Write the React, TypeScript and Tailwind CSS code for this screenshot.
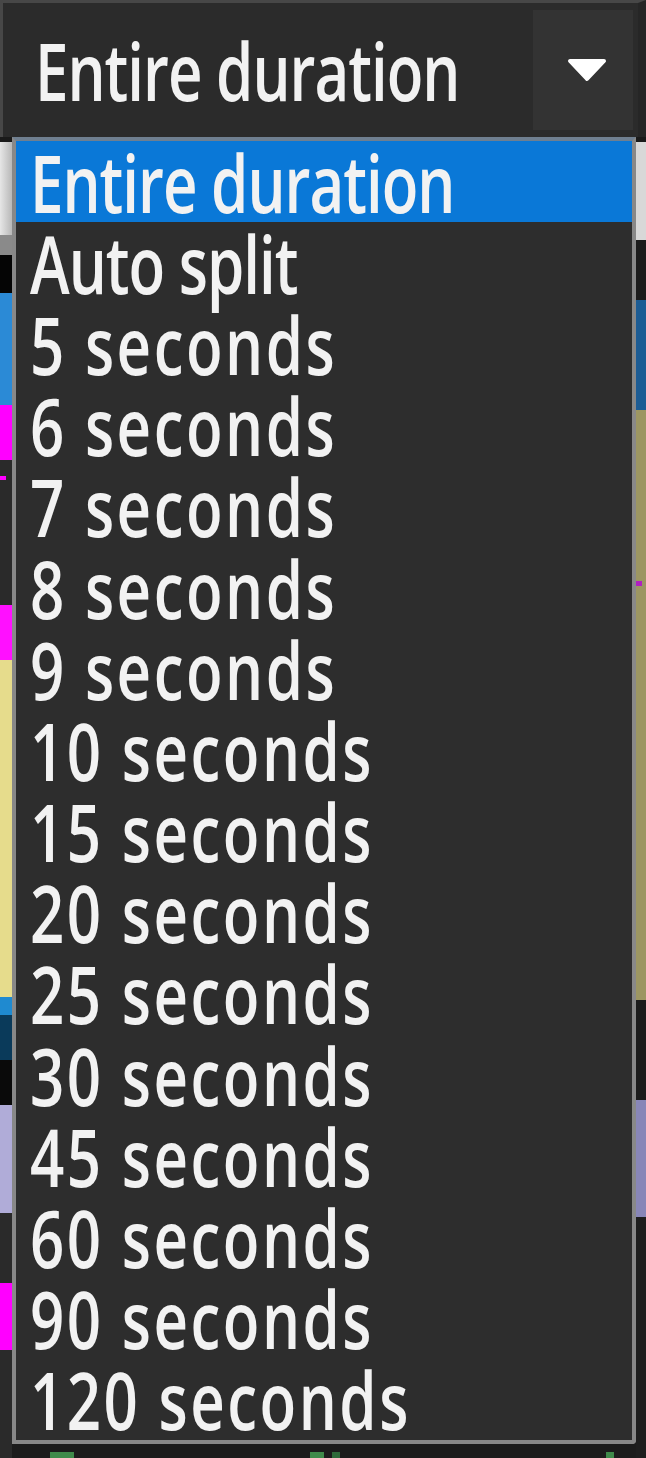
import React from 'react';

const items = [
  'Entire duration',
  'Auto split',
  '5 seconds',
  '6 seconds',
  '7 seconds',
  '8 seconds',
  '9 seconds',
  '10 seconds',
  '15 seconds',
  '20 seconds',
  '25 seconds',
  '30 seconds',
  '45 seconds',
  '60 seconds',
  '90 seconds',
  '120 seconds',
];

// bits of the window behind the open list, left edge
function LeftStrip() {
  return (
    <div className="w-[12px] flex flex-col shrink-0">
      <div className="h-[5px] bg-[#1a1a1a]" />
      <div className="h-[93px] bg-gradient-to-r from-[#e6e6e6] to-[#b8b8b8]" />
      <div className="h-[20px] bg-[#8a8a8a]" />
      <div className="h-[38px] bg-[#050505]" />
      <div className="h-[112px] bg-[#2b8ad6]" />
      <div className="h-[55px] bg-[#ff00ff]" />
      <div className="h-[145px] bg-[#2a2a2a] flex flex-col pt-[16px]">
        <div className="h-[4px] w-[6px] bg-[#ff00ff]" />
      </div>
      <div className="h-[55px] bg-[#ff10ff]" />
      <div className="h-[337px] bg-[#e6dc8c]" />
      <div className="h-[18px] bg-[#1f8ad0]" />
      <div className="h-[45px] bg-[#0a3a5a]" />
      <div className="h-[45px] bg-[#0a0a0a]" />
      <div className="h-[108px] bg-[#b0acd8]" />
      <div className="h-[70px] bg-[#2a2a2a]" />
      <div className="h-[67px] bg-[#ff00ff]" />
      <div className="flex-1 bg-[#2a2a2a]" />
    </div>
  );
}

function RightStrip() {
  return (
    <div className="w-[10px] flex flex-col shrink-0">
      <div className="h-[5px] bg-[#1a1a1a]" />
      <div className="h-[98px] bg-[#d8d8d8]" />
      <div className="h-[60px] bg-[#1c1c1c]" />
      <div className="h-[110px] bg-[#1c5c94]" />
      <div className="h-[590px] bg-[#9c9662] flex flex-col pt-[171px]">
        <div className="h-[5px] w-[6px] bg-[#b020c0]" />
      </div>
      <div className="h-[100px] bg-[#1c1c1c]" />
      <div className="h-[117px] bg-[#8886b8]" />
      <div className="flex-1 bg-[#1e1e1e]" />
    </div>
  );
}

function Item({ label, selected }: { label: string; selected?: boolean }) {
  const wide = /\d/.test(label);
  return (
    <div
      className={
        'h-[81.2px] flex items-center pl-[14px] ' +
        (selected ? 'bg-[#0a78d7]' : '')
      }
    >
      <span
        className={
          'inline-block scale-y-[1.34] leading-[58px] ' +
          (wide ? 'tracking-[2.5px]' : 'tracking-[-1px]')
        }
      >
        {label}
      </span>
    </div>
  );
}

export default function App() {
  return (
    <div className="w-[646px] h-[1458px] bg-[#1e1e1e] flex flex-col overflow-hidden font-['Open_Sans',sans-serif] font-semibold text-[60px] text-[#f2f2f2]">
      {/* Combo box */}
      <div className="h-[137px] flex shrink-0 border-t-[3px] border-l-[3px] border-r-[8px] border-[#474747] border-r-[#262626] bg-[#2b2b2b]">
        <div className="flex-1 flex items-center pl-[32px]">
          <span className="inline-block scale-y-[1.34] leading-[58px] tracking-[-1px]">Entire duration</span>
        </div>
        <div className="w-[100px] my-[7px] mr-[5px] bg-[#333333] flex items-center justify-center pl-[8px]">
          <svg width="40" height="24" viewBox="0 0 40 24">
            <path d="M3 3 L37 3 L20 21 Z" fill="#ffffff" stroke="#ffffff" strokeWidth="4" strokeLinejoin="round" />
          </svg>
        </div>
      </div>

      <div className="flex-1 flex">
        <LeftStrip />
        <div className="w-[624px] flex flex-col">
          {/* Open list */}
          <div className="h-[1307px] border-[4px] border-[#888888] border-t-[#6f7f90] rounded-br-[4px] bg-[#2d2d2d] flex flex-col">
            {items.map((it, i) => (
              <Item key={it} label={it} selected={i === 0} />
            ))}
          </div>
          <div className="flex-1 bg-[#1c1c1c] flex items-end">
            <div className="ml-[38px] w-[24px] h-[6px] bg-[#3f8a4a]" />
            <div className="ml-[236px] w-[14px] h-[6px] bg-[#3f8a4a]" />
            <div className="ml-[8px] w-[8px] h-[6px] bg-[#2f6a3a]" />
            <div className="ml-[266px] w-[8px] h-[6px] bg-[#3f8a4a]" />
          </div>
        </div>
        <RightStrip />
      </div>
    </div>
  );
}
